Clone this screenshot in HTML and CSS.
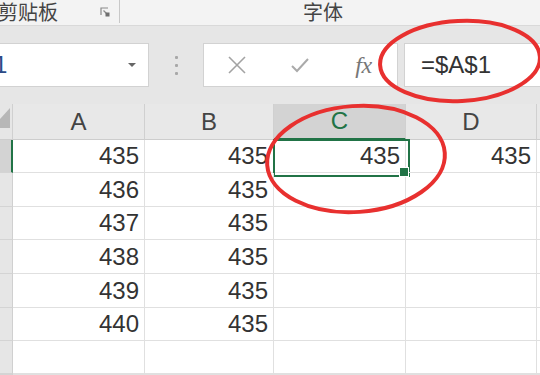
FILE: index.html
```html
<!DOCTYPE html>
<html>
<head>
<meta charset="utf-8">
<link rel="stylesheet" href="styles.css">
</head>
<body>
<div class="ribbon">
  <div class="group group-clip">
    <span class="group-label clip-label">剪贴板</span>
    <svg class="launcher" width="10" height="10" viewBox="0 0 10 10">
      <path d="M1 8V1h7" fill="none" stroke="#8a8a8a" stroke-width="1.2"/>
      <path d="M3.5 3.5l3.5 3.5" stroke="#8a8a8a" stroke-width="1.2"/>
      <rect x="5.5" y="5.5" width="4" height="4" fill="#6f6f6f"/>
    </svg>
  </div>
  <div class="group group-font">
    <span class="group-label">字体</span>
  </div>
</div>

<div class="fbar">
  <div class="namebox">
    <span class="name-text">A1</span>
    <span class="caret"></span>
  </div>
  <div class="dots"><i></i><i></i><i></i></div>
  <div class="fbtns">
    <div class="fbtn b1">
      <svg width="20" height="20" viewBox="0 0 20 20"><path d="M2 2L18 18M18 2L2 18" stroke="#a3a3a3" stroke-width="1.6" fill="none"/></svg>
    </div>
    <div class="fbtn b2">
      <svg width="20" height="20" viewBox="0 0 20 20"><path d="M2 11l5 5L18 4" stroke="#aaaaaa" stroke-width="2" fill="none"/></svg>
    </div>
    <div class="fbtn b3"><span class="fx">fx</span></div>
  </div>
  <div class="finput">=$A$1</div>
</div>

<div class="sheet">
  <div class="hc corner">
    <svg width="12" height="35" viewBox="0 0 12 35"><path d="M10 4V24H-8Z" fill="#b7b7b7"/></svg>
  </div>
  <div class="hc">A</div>
  <div class="hc">B</div>
  <div class="hc sel">C</div>
  <div class="hc">D</div>
  <div class="hc"></div>

  <div class="rh selr"></div><div class="c">435</div><div class="c">435</div><div class="c active">435</div><div class="c">435</div><div class="c"></div>
  <div class="rh"></div><div class="c">436</div><div class="c">435</div><div class="c"></div><div class="c"></div><div class="c"></div>
  <div class="rh"></div><div class="c">437</div><div class="c">435</div><div class="c"></div><div class="c"></div><div class="c"></div>
  <div class="rh"></div><div class="c">438</div><div class="c">435</div><div class="c"></div><div class="c"></div><div class="c"></div>
  <div class="rh"></div><div class="c">439</div><div class="c">435</div><div class="c"></div><div class="c"></div><div class="c"></div>
  <div class="rh"></div><div class="c">440</div><div class="c">435</div><div class="c"></div><div class="c"></div><div class="c"></div>
  <div class="rh"></div><div class="c"></div><div class="c"></div><div class="c"></div><div class="c"></div><div class="c"></div>
  <div class="rh"></div><div class="c"></div><div class="c"></div><div class="c"></div><div class="c"></div><div class="c"></div>
</div>

<svg class="marks" width="540" height="375" viewBox="0 0 540 375">
  <ellipse cx="460" cy="61" rx="80" ry="40" transform="rotate(-3 460 61)" fill="none" stroke="#e8302f" stroke-width="4"/>
  <ellipse cx="356" cy="159" rx="89" ry="53" transform="rotate(-4 356 159)" fill="none" stroke="#e8302f" stroke-width="4"/>
</svg>
</body>
</html>
```

FILE: styles.css
```css
* { box-sizing: border-box; margin: 0; padding: 0; }
html, body { width: 540px; height: 375px; overflow: hidden; background: #fff; }
body { position: relative; font-family: "Liberation Sans", Arial, sans-serif; color: #333; }

.ribbon {
  height: 26px;
  background: #f3f3f3;
  border-bottom: 1px solid #d9d9d9;
  display: flex;
  align-items: flex-start;
}
.group { height: 23px; display: flex; align-items: center; }
.group-clip { width: 120px; border-right: 1px solid #c8c8c8; }
.group-label {
  font-family: "Noto Sans CJK SC", sans-serif;
  font-size: 20px;
  line-height: 23px;
  color: #444;
}
.clip-label { margin-left: -2px; }
.launcher { margin-left: 42px; margin-top: 1px; }
.group-font { margin-left: 183px; }

.fbar {
  height: 78px;
  background: #e6e6e6;
  padding-top: 17px;
  display: flex;
  align-items: flex-start;
}
.namebox {
  width: 150px;
  height: 44px;
  margin-left: -1px;
  background: #fff;
  border: 1px solid #d2d2d2;
  display: flex;
  align-items: center;
  justify-content: space-between;
  padding-right: 12px;
  overflow: hidden;
}
.name-text { font-size: 24px; color: #2c4a86; margin-left: -22px; }
.caret {
  width: 0; height: 0;
  border-left: 4px solid transparent;
  border-right: 4px solid transparent;
  border-top: 4px solid #666;
}
.dots {
  width: 54px;
  height: 44px;
  display: flex;
  flex-direction: column;
  align-items: center;
  justify-content: center;
  gap: 5px;
}
.dots i { display: block; width: 3px; height: 3px; background: #a8a8a8; border-radius: 1px; }

.fbtns {
  width: 195px;
  height: 44px;
  background: #fff;
  border: 1px solid #d2d2d2;
  display: flex;
}
.fbtn { display: flex; align-items: center; justify-content: center; height: 100%; }
.b1 { width: 66px; }
.b2 { width: 60px; }
.b3 { flex: 1; padding-top: 1px; }
.fx {
  font-family: "Liberation Serif", "Times New Roman", serif;
  font-style: italic;
  font-size: 24px;
  color: #777;
  letter-spacing: -0.5px;
}
.finput {
  flex: 1;
  height: 44px;
  margin-left: 6px;
  background: #fff;
  border: 1px solid #d2d2d2;
  border-right: none;
  display: flex;
  align-items: center;
  padding-left: 16px;
  font-size: 24px;
  color: #333;
}

.sheet {
  display: grid;
  grid-template-columns: 13px 132px 129px 132px 131px 1fr;
  grid-template-rows: 36px 33px 34px 33px 34px 34px 33px 33px 1fr;
  height: 271px;
}
.hc {
  background: #e8e8e8;
  border-right: 1px solid #d0d0d0;
  border-bottom: 1px solid #cdcdcd;
  display: flex;
  align-items: center;
  justify-content: center;
  font-size: 24px;
  color: #444;
}
.hc.corner { background: #e6e6e6; align-items: flex-start; justify-content: flex-start; }
.hc.sel { background: #d3d3d3; color: #217346; border-bottom: 2px solid #217346; }
.rh {
  background: #e6e6e6;
  border-right: 1px solid #d0d0d0;
  border-bottom: 1px solid #d4d4d4;
}
.rh.selr { background: #d3d3d3; border-right: 2px solid #217346; }
.c {
  border-right: 1px solid #e0e0e0;
  border-bottom: 1px solid #e0e0e0;
  display: flex;
  align-items: center;
  justify-content: flex-end;
  padding-right: 5px;
  font-size: 24px;
  color: #333;
  position: relative;
}
.c.active::after {
  content: "";
  position: absolute;
  left: -1px;
  top: -1px;
  width: 133px;
  height: 34px;
  border: 2px solid #217346;
}
.c.active::before {
  content: "";
  position: absolute;
  left: 125px;
  top: 27px;
  width: 8px;
  height: 8px;
  background: #217346;
  border: 1px solid #fff;
  z-index: 2;
}

.marks { position: absolute; left: 0; top: 0; pointer-events: none; }
```
